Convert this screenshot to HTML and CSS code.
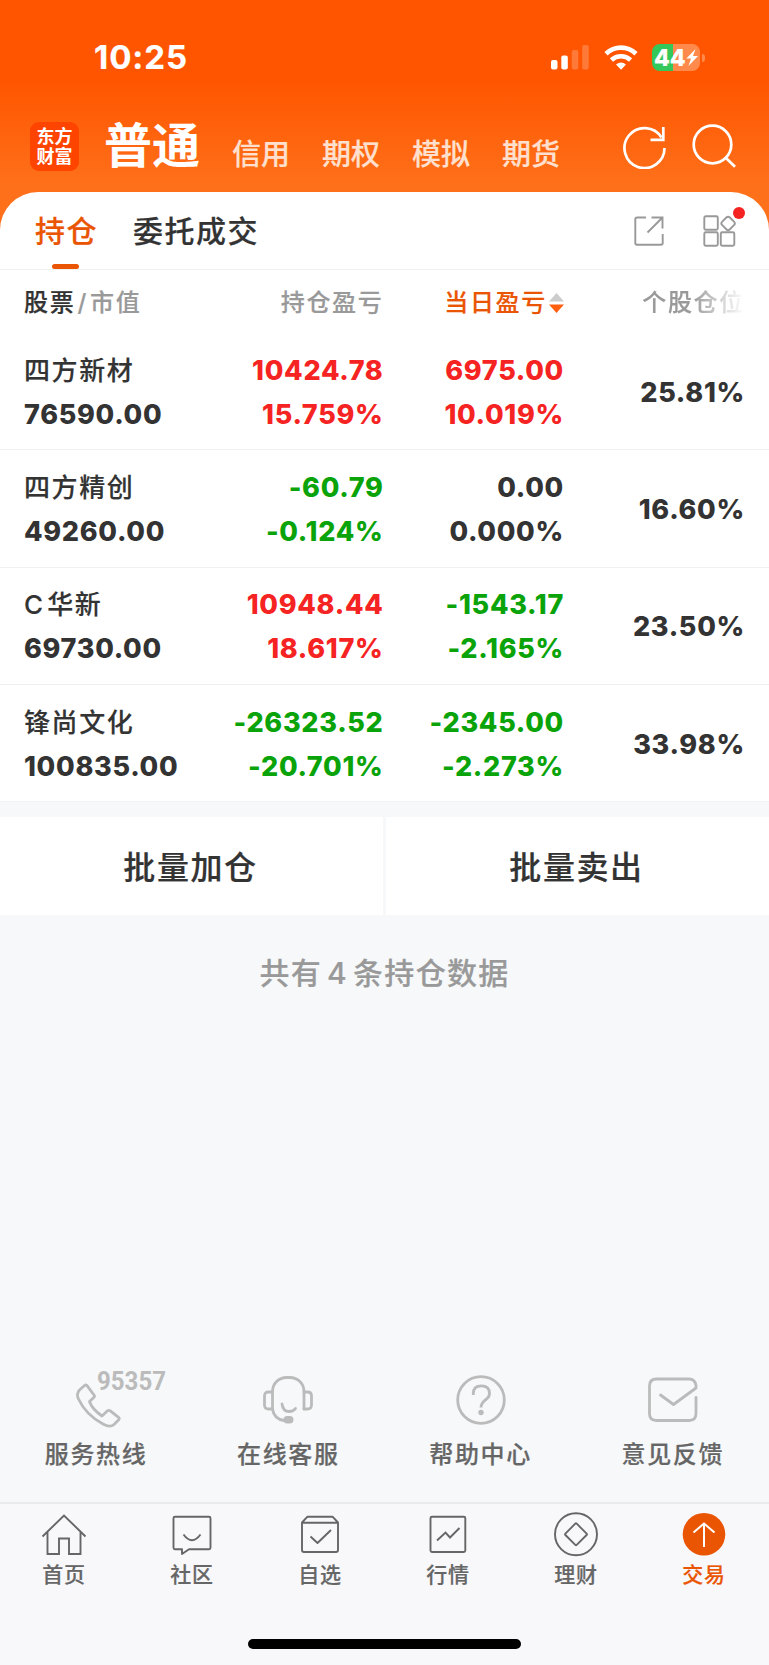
FILE: index.html
```
<!DOCTYPE html>
<html lang="zh-CN">
<head>
    <meta charset="UTF-8">
    <meta name="viewport" content="width=device-width, initial-scale=1.0">
    <title>普通交易 - 持仓</title>
    <link rel="stylesheet" href="styles.css">
</head>
<body>
    <header class="top">
        <!-- Status bar -->
        <div class="status-bar">
            <span class="time">10:25</span>
            <div class="status-icons">
                <svg class="signal" width="38" height="25" viewBox="0 0 38 25" fill="#fff">
                    <rect x="0" y="15" width="6.5" height="9.5" rx="2"/>
                    <rect x="10.3" y="10.5" width="6.5" height="14" rx="2"/>
                    <rect x="20.8" y="5" width="6.5" height="19.5" rx="2" opacity=".22"/>
                    <rect x="31.2" y="0" width="6.5" height="24.5" rx="2" opacity=".22"/>
                </svg>
                <svg class="wifi" width="34" height="25" viewBox="0 0 34 25" fill="none" stroke="#fff" stroke-width="4.6">
                    <path d="M2 8.7Q8.5 2.6 17 2.6T32 8.7"/>
                    <path d="M7.4 15Q11.6 11.2 17 11.2T26.6 15"/>
                    <path d="M12 19.5Q17 15.4 22 19.5L17 24.8Z" fill="#fff" stroke="none"/>
                </svg>
                <div class="battery">
                    <span>44</span>
                    <svg width="12" height="17" viewBox="0 0 12 17" fill="#fff"><path d="M9.5 0L0.3 9.6H5L2.5 17L12 6.9H7Z"/></svg>
                </div>
            </div>
        </div>

        <!-- Account types -->
        <div class="account-bar">
            <div class="logo"><span>东方</span><span>财富</span></div>
            <h1>普通</h1>
            <nav class="accounts">
                <a>信用</a>
                <a>期权</a>
                <a>模拟</a>
                <a>期货</a>
            </nav>
            <svg class="refresh" width="44" height="44" viewBox="0 0 44 44" fill="none" stroke="#fff" stroke-width="2.7">
                <path d="M41.5 23A20 20 0 1 1 38.5 12.5"/>
                <path d="M40.3 2V14.8H27.5"/>
            </svg>
            <svg class="search" width="44" height="44" viewBox="0 0 44 44" fill="none" stroke="#fff" stroke-width="2.7">
                <circle cx="20.5" cy="20.5" r="18.8"/>
                <path d="M33.5 33.5L43 42.8"/>
            </svg>
        </div>
    </header>

    <main>
        <section class="card">
            <div class="tabs">
                <a class="tab active">持仓</a>
                <a class="tab">委托成交</a>
                <svg class="share" width="30" height="30" viewBox="0 0 30 30" fill="none" stroke="#999" stroke-width="1.9">
                    <path d="M12 1.5H3Q1.3 1.5 1.3 3V27Q1.3 28.7 3 28.7H27Q28.7 28.7 28.7 27V18"/>
                    <path d="M17.5 1.5H28.5V12.5M28 2L13.5 16.5"/>
                </svg>
                <div class="apps">
                    <svg width="33" height="32" viewBox="0 0 33 32" fill="none" stroke="#999" stroke-width="1.9">
                        <rect x="1.3" y="1.3" width="13.5" height="13.5" rx="1.5"/>
                        <rect x="1.3" y="17.2" width="13.5" height="13.5" rx="1.5"/>
                        <rect x="17.8" y="17.2" width="13.5" height="13.5" rx="1.5"/>
                        <rect x="19.7" y="3" width="10.8" height="10.8" rx="2.5" transform="rotate(45 25.1 8.4)"/>
                    </svg>
                    <i class="dot"></i>
                </div>
            </div>

            <div class="row row-head">
                <span class="name-head"><b>股票</b><i>/</i>市值</span>
                <span>持仓盈亏</span>
                <span class="sorted">当日盈亏<svg width="15" height="20" viewBox="0 0 15 20"><path d="M0 8.5L7.5 0L15 8.5Z" fill="#ccc"/><path d="M0 11.5H15L7.5 20Z" fill="#ff5f0f"/></svg></span>
                <span class="fade">个股仓位</span>
            </div>

            <div class="row">
                <div class="stock"><span class="name">四方新材</span><span>76590.00</span></div>
                <div class="num up"><span>10424.78</span><span>15.759%</span></div>
                <div class="num up"><span>6975.00</span><span>10.019%</span></div>
                <div class="num">25.81%</div>
            </div>
            <div class="row">
                <div class="stock"><span class="name">四方精创</span><span>49260.00</span></div>
                <div class="num down"><span>-60.79</span><span>-0.124%</span></div>
                <div class="num"><span>0.00</span><span>0.000%</span></div>
                <div class="num">16.60%</div>
            </div>
            <div class="row">
                <div class="stock"><span class="name latin">C 华新</span><span>69730.00</span></div>
                <div class="num up"><span>10948.44</span><span>18.617%</span></div>
                <div class="num down"><span>-1543.17</span><span>-2.165%</span></div>
                <div class="num">23.50%</div>
            </div>
            <div class="row">
                <div class="stock"><span class="name">锋尚文化</span><span>100835.00</span></div>
                <div class="num down"><span>-26323.52</span><span>-20.701%</span></div>
                <div class="num down"><span>-2345.00</span><span>-2.273%</span></div>
                <div class="num">33.98%</div>
            </div>
        </section>

        <div class="batch">
            <button>批量加仓</button>
            <button>批量卖出</button>
        </div>

        <p class="summary">共有<span>4</span>条持仓数据</p>
    </main>

    <!-- Service entries -->
    <section class="services">
        <a>
            <svg class="phone" width="112" height="72" viewBox="0 -10 112 72" fill="none" stroke="#bbb" stroke-width="2.8" stroke-linejoin="round">
                <path d="M12.5 16.5Q13.7 15.3 15 16.6L22 26Q23 27.3 21.8 28.5L17.5 32.5Q20 40 30 47L35.5 41.8Q36.5 41 38 41.7L46.5 48.3Q48 49.5 46.5 51L42 55.5Q38 59 31 55Q14 46 6.5 30Q4 25 7.5 21Z"/>
                <text class="hotline" x="25" y="20.5" textLength="69" lengthAdjust="spacingAndGlyphs">95357</text>
            </svg>
            服务热线
        </a>
        <a>
            <svg width="50" height="62" viewBox="0 0 50 62" fill="none" stroke="#bbb" stroke-width="2.8" stroke-linecap="round">
                <path d="M9.5 40V22.500A14 14 0 0 1 23.500 8.500H27A14 14 0 0 1 41 22.500V40"/>
                <path d="M9.500 23H5.500Q1.500 23 1.500 27V36Q1.500 40 5.500 40H9.500M41 23H44.500Q48.500 23 48.500 27V36Q48.500 40 44.500 40H41"/>
                <path d="M9.500 40Q11 50 21 51.500M19 35Q20 42.500 26 42.500Q30.500 42.500 32.500 39.500"/>
                <rect x="20.5" y="47" width="10" height="7.5" rx="3.7" fill="#bbb" stroke="none"/>
            </svg>
            在线客服
        </a>
        <a>
            <svg width="50" height="62" viewBox="0 0 50 62" fill="none" stroke="#bbb" stroke-width="2.8">
                <circle cx="25" cy="31" r="23.3"/>
                <path d="M17.3 26V24.5Q17.3 16.8 25.3 16.8Q33.5 16.8 33.5 24.5Q33.5 28 30 30.5Q25 34 25 38.5"/>
                <circle cx="25" cy="43.5" r="2.7" fill="#bbb" stroke="none"/>
            </svg>
            帮助中心
        </a>
        <a>
            <svg width="50" height="62" viewBox="0 0 50 62" fill="none" stroke="#bbb" stroke-width="2.8" stroke-linecap="round" stroke-linejoin="round">
                <path d="M48 28.5V44.5Q48 51.5 41 51.5H8.5Q1.5 51.5 1.5 44.5V17Q1.5 10 8.5 10H41Q47 10 48 16.5V19L25.5 35.5L12.5 26"/>
            </svg>
            意见反馈
        </a>
    </section>

    <!-- Bottom tab bar -->
    <footer class="tab-bar">
        <nav>
            <a>
                <svg width="46" height="46" viewBox="0 0 46 46" fill="none" stroke="#666" stroke-width="1.9">
                    <path d="M1.5 24.5L23 3.5L44.5 24.5M6.5 20V42H18V26.5H28V42H39.5V20"/>
                </svg>
                首页
            </a>
            <a>
                <svg width="46" height="46" viewBox="0 0 46 46" fill="none" stroke="#666" stroke-width="1.9" stroke-linejoin="round">
                    <path d="M6 4.7H40Q41.5 4.7 41.5 6.2V35.8Q41.5 37.3 40 37.3H20L13 42V37.3H6Q4.5 37.3 4.5 35.8V6.2Q4.5 4.7 6 4.7Z"/>
                    <path d="M14.5 22.5Q23 34 31.5 22.5"/>
                </svg>
                社区
            </a>
            <a>
                <svg width="46" height="46" viewBox="0 0 46 46" fill="none" stroke="#666" stroke-width="1.9" stroke-linejoin="round">
                    <path d="M10.5 4.7H35.5L41 10.5V38Q41 40 39 40H7Q5 40 5 38V10.5ZM5 10.8H41M13.5 24.5L20.5 31L34 18"/>
                </svg>
                自选
            </a>
            <a>
                <svg width="46" height="46" viewBox="0 0 46 46" fill="none" stroke="#666" stroke-width="1.9">
                    <rect x="5.5" y="4.7" width="34.8" height="35.3" rx="1.5"/>
                    <path d="M12 28.5L20.5 20.5L25 25.5L34.5 16"/>
                </svg>
                行情
            </a>
            <a>
                <svg width="46" height="46" viewBox="0 0 46 46" fill="none" stroke="#666" stroke-width="1.9">
                    <circle cx="23" cy="22.3" r="21"/>
                    <rect x="15" y="14.3" width="16" height="16" rx="1" transform="rotate(45 23 22.3)"/>
                </svg>
                理财
            </a>
            <a class="active">
                <svg width="46" height="46" viewBox="0 0 46 46" fill="none" stroke="#fff" stroke-width="2">
                    <circle cx="23" cy="22.3" r="21.3" fill="#ea5504" stroke="none"/>
                    <path d="M23 35V11.5M12.5 20.5L23 11.5L33.5 20.5"/>
                </svg>
                交易
            </a>
        </nav>
        <div class="home-indicator"></div>
    </footer>
</body>
</html>
```
FILE: styles.css
```
:root {
    --orange: #ea5504;
    --text: #333333;
    --muted: #999999;
    --up: #f62323;
    --down: #0aa30a;
    --page: #f6f8fa;
}

/* General Reset */
* {
    margin: 0;
    padding: 0;
    box-sizing: border-box;
}

body {
    display: flex;
    flex-direction: column;
    height: 1665px;
    font-family: Inter, "Noto Sans CJK SC", sans-serif;
    font-weight: 500;
    color: var(--text);
    background: linear-gradient(#ff5500 80px, #ff701a 185px, #ff701a 240px, var(--page) 240px);
    -webkit-text-stroke: 0.2px currentColor;
    overflow: hidden;
}

svg {
    display: block;
    flex: none;
}

i,
b {
    font-style: normal;
    font-weight: inherit;
}

/* Header */
.top {
    height: 192px;
    color: #fff;
}

.status-bar {
    display: flex;
    justify-content: space-between;
    height: 115px;
    padding: 36px 64px 0 94px;
}

.time {
    font-size: 33px;
    font-weight: 700;
    line-height: 42px;
    letter-spacing: 0.9px;
}

.status-icons {
    display: flex;
    align-items: center;
    height: 43px;
}

.wifi {
    margin: 0 14px 0 15px;
}

.battery {
    position: relative;
    display: flex;
    align-items: center;
    width: 48px;
    height: 27px;
    margin-right: 5px;
    padding-left: 2px;
    border-radius: 8px;
    background: linear-gradient(90deg, #34c759 21px, #ff8a4c 21px);
    font-size: 23px;
    font-weight: 800;
}

.battery::after {
    content: "";
    position: absolute;
    right: -5px;
    top: 10px;
    width: 3px;
    height: 8px;
    border-radius: 0 3px 3px 0;
    background: #ff8a4c;
}

.account-bar {
    display: flex;
    height: 76px;
    padding: 0 33px 0 30px;
}

.logo {
    display: flex;
    flex-direction: column;
    align-items: center;
    justify-content: center;
    width: 49px;
    height: 49px;
    margin-top: 7px;
    border-radius: 9px;
    background: #ff4400;
    font-size: 18px;
    font-weight: 700;
    line-height: 20px;
    -webkit-text-stroke: 0;
}

h1 {
    margin-left: 25px;
    font-size: 48px;
    font-weight: 700;
    line-height: 62px;
    -webkit-text-stroke: 0;
}

.accounts {
    display: flex;
    gap: 32px;
    flex: 1;
    margin-left: 32px;
    font-size: 29px;
    line-height: 80px;
    color: #ffe0cf;
}

.refresh {
    margin: 10px 25px 0 0;
}

.search {
    margin-top: 9px;
}

/* Holdings card */
.card {
    border-radius: 38px 38px 0 0;
    background: #fff;
    border-bottom: 1px solid #f2f3f5;
}

.tabs {
    display: flex;
    align-items: center;
    height: 78px;
    padding: 0 33px 0 35px;
    border-bottom: 1px solid #f0f0f0;
    font-size: 30px;
    letter-spacing: 1.5px;
}

.tab {
    position: relative;
    margin-right: 35px;
    line-height: 78px;
}

.tab.active {
    color: var(--orange);
}

.tab.active::after {
    content: "";
    position: absolute;
    left: 17px;
    bottom: 1px;
    width: 27px;
    height: 5px;
    border-radius: 3px;
    background: var(--orange);
}

.share {
    margin-left: auto;
}

.apps {
    position: relative;
    margin-left: 39px;
}

.dot {
    position: absolute;
    top: -8px;
    right: -9px;
    width: 12px;
    height: 12px;
    border-radius: 50%;
    background: #f62323;
}

.row {
    display: grid;
    grid-template-columns: 177.5px 182px 180.5px 181px;
    align-items: center;
    height: 117.3px;
    padding: 3px 24px 0;
    font-size: 27px;
    font-weight: 800;
    line-height: 44px;
    letter-spacing: 0.7px;
    -webkit-text-stroke: 0;
}

.row + .row {
    padding-top: 4px;
}

.row + .row + .row {
    padding-top: 3px;
    border-top: 1px solid #f0f0f0;
}

.row-head {
    height: 62px;
    font-size: 24px;
    font-weight: 500;
    letter-spacing: 1.7px;
    text-align: right;
    color: var(--muted);
    -webkit-text-stroke: 0.2px currentColor;
}

.name-head {
    text-align: left;
}

.name-head b {
    color: var(--text);
}

.name-head i {
    margin: 0 2px;
}

.sorted {
    display: flex;
    align-items: center;
    justify-content: flex-end;
    gap: 2px;
    color: var(--orange);
}

.fade {
    -webkit-mask-image: linear-gradient(90deg, #000 70%, transparent);
    mask-image: linear-gradient(90deg, #000 70%, transparent);
}

.stock,
.num {
    display: flex;
    flex-direction: column;
}

.num {
    text-align: right;
}

.name {
    font-size: 26px;
    font-weight: 500;
    letter-spacing: 1.6px;
    -webkit-text-stroke: 0.15px currentColor;
}

.latin {
    word-spacing: -6px;
}

.up {
    color: var(--up);
}

.down {
    color: var(--down);
}

/* Batch buttons */
.batch {
    display: grid;
    grid-template-columns: 1fr 1fr;
    gap: 3px;
    margin-top: 15px;
}

.batch button {
    height: 98px;
    padding: 0 2px 3px 0;
    border: none;
    background: #fff;
    color: var(--text);
    font: inherit;
    font-size: 32px;
    letter-spacing: 1.6px;
    -webkit-text-stroke: inherit;
}

.summary {
    margin-top: 36px;
    font-size: 30px;
    line-height: 44px;
    letter-spacing: 1.3px;
    text-align: center;
    color: var(--muted);
}

.summary span {
    margin: 0 5px;
}

/* Services */
.services {
    display: grid;
    grid-template-columns: repeat(4, 1fr);
    margin-top: auto;
    padding-bottom: 29px;
    font-size: 24px;
    line-height: 36px;
    letter-spacing: 1.7px;
    color: #666;
}

.services a,
.tab-bar a {
    display: flex;
    flex-direction: column;
    align-items: center;
}

.services svg {
    margin-bottom: 6px;
}

.services .phone {
    margin-top: -10px;
    margin-left: 64px;
}

.hotline {
    font-family: Roboto, sans-serif;
    font-size: 26px;
    font-weight: 700;
    letter-spacing: 0;
    fill: #bbb;
    stroke: none;
}

/* Bottom tab bar */
.tab-bar {
    height: 163px;
    border-top: 2px solid #e9eaec;
    background: #f8f8fb;
}

.tab-bar nav {
    display: grid;
    grid-template-columns: repeat(6, 1fr);
    padding: 8px 1px 0 0;
    font-size: 21px;
    line-height: 32px;
    letter-spacing: 0.8px;
    color: #666;
}

.tab-bar svg {
    margin-bottom: 1px;
}

.tab-bar .active {
    color: var(--orange);
}

.home-indicator {
    width: 273px;
    height: 10px;
    margin: 48px auto 0;
    border-radius: 5px;
    background: #000;
}
```
